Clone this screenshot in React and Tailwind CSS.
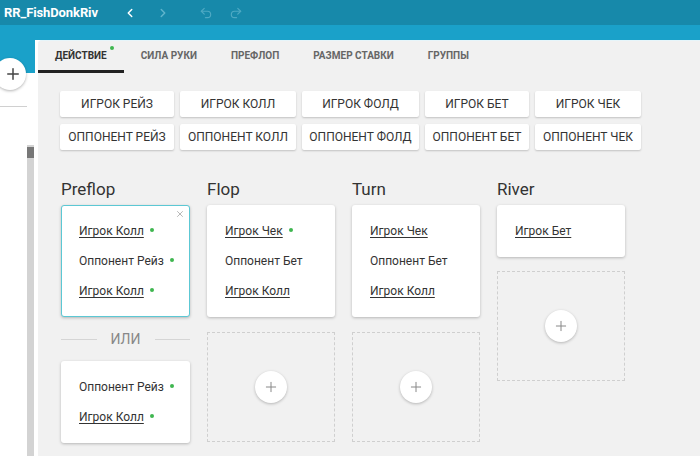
import { ChevronLeft, ChevronRight, Undo2, Redo2, Plus, X } from 'lucide-react'

const tabs = ['Действие', 'Сила руки', 'Префлоп', 'Размер ставки', 'Группы']

const actions = [
  'Игрок рейз', 'Игрок колл', 'Игрок фолд', 'Игрок бет', 'Игрок чек',
  'Оппонент рейз', 'Оппонент колл', 'Оппонент фолд', 'Оппонент бет', 'Оппонент чек',
]

const Dot = () => <span className="inline-block w-[4px] h-[4px] rounded-full bg-[#3fb650] ml-[6px] mb-[2px]" />

function Item({ text, link, dot }) {
  return (
    <div className="h-[30px] flex items-center whitespace-nowrap text-[12px] text-[#333]">
      <span className={link ? 'underline underline-offset-2 decoration-[#333]' : ''}>{text}</span>
      {dot && <Dot />}
    </div>
  )
}

function Card({ items, selected }) {
  return (
    <div
      className={
        'relative bg-white rounded-[3px] pl-[17px] pr-[8px] py-[10px] shadow-[0_1px_3px_rgba(0,0,0,0.25)] ' +
        (selected ? 'border border-[#5cc8d4]' : 'border border-transparent')
      }
    >
      {selected && <X size={10} strokeWidth={2} className="absolute right-[4px] top-[3px] text-[#aaa]" />}
      {items.map((it, i) => (
        <Item key={i} {...it} />
      ))}
    </div>
  )
}

function AddBox() {
  return (
    <div className="h-[110px] border border-dashed border-[#cfcfcf] flex items-center justify-center">
      <div className="w-[32px] h-[32px] rounded-full bg-white shadow-[0_1px_3px_rgba(0,0,0,0.25)] flex items-center justify-center">
        <Plus size={16} strokeWidth={1.5} className="text-[#888]" />
      </div>
    </div>
  )
}

export default function App() {
  return (
    <div className="w-[700px] h-[456px] overflow-hidden flex flex-col bg-white" style={{ fontFamily: 'Roboto, "Noto Sans", sans-serif' }}>
      {/* Header */}
      <div className="h-[25px] bg-[#1789aa] flex items-center shrink-0">
        <span className="ml-[4px] text-white font-bold text-[13px] tracking-[-0.1px]">RR_FishDonkRiv</span>
        <ChevronLeft size={14} strokeWidth={2.5} className="ml-[25px] text-white" />
        <ChevronRight size={14} strokeWidth={2.5} className="ml-[19px] text-[#5fb4cc]" />
        <Undo2 size={14} strokeWidth={2} className="ml-[29px] text-[#4ea9c3]" />
        <Redo2 size={14} strokeWidth={2} className="ml-[16px] text-[#4ea9c3]" />
      </div>

      <div className="flex-1 flex bg-[linear-gradient(to_bottom,#1aa1c9_15px,#ffffff_15px)]">
        {/* Sidebar */}
        <div className="w-[35px] flex flex-col shrink-0">
          <div className="relative h-[48px] bg-[#1aa1c9]">
            <div className="absolute left-[-6px] top-[33px] w-[32px] h-[32px] rounded-full bg-white shadow-[0_1px_3px_rgba(0,0,0,0.3)] flex items-center justify-center">
              <Plus size={18} strokeWidth={2} className="ml-[6px] text-[#444]" />
            </div>
          </div>
          <div className="h-[33px]" />
          <div className="w-[27px] h-px bg-[#d0d0d0]" />
          <div className="flex-1 flex justify-end pr-[1px] pt-[38px]">
            <div className="w-[7px] bg-[#d3d3d3] flex flex-col">
              <div className="h-[2px]" />
              <div className="h-[11px] bg-[#777]" />
            </div>
          </div>
        </div>

        {/* Main */}
        <div className="flex-1 ml-[3px] mt-[15px] bg-[#f1f1f1] rounded-tl-[4px] border-t border-[#e6f5fa] flex flex-col">
          <div className="h-[32px] flex items-stretch">
            {tabs.map((t, i) => (
              <div
                key={t}
                className={
                  'px-[17px] flex items-center uppercase font-bold text-[10px] ' +
                  (i === 0 ? 'text-[#333] border-b-[3px] border-[#222]' : 'text-[#666] pb-[3px]')
                }
              >
                <span className="relative">
                  {t}
                  {i === 0 && <span className="absolute -right-[7px] top-[-2px] w-[4px] h-[4px] rounded-full bg-[#3fb650]" />}
                </span>
              </div>
            ))}
          </div>

          <div className="pl-[22px] pt-[18px]">
            <div className="grid grid-cols-[114px_116px_117px_104px_106px] gap-x-[6px] gap-y-[7px]">
              {actions.map((a) => (
                <div
                  key={a}
                  className="h-[26px] bg-white rounded-[2px] shadow-[0_1px_2px_rgba(0,0,0,0.2)] flex items-center justify-center uppercase text-[12px] text-[#333]"
                >
                  {a}
                </div>
              ))}
            </div>

            <div className="mt-[29px] flex gap-[17px]">
              {/* Preflop */}
              <div className="w-[129px] ml-[1px] flex flex-col">
                <div className="text-[17px] text-[#333] h-[26px] leading-[20px]">Preflop</div>
                <Card
                  selected
                  items={[
                    { text: 'Игрок Колл', link: true, dot: true },
                    { text: 'Оппонент Рейз', dot: true },
                    { text: 'Игрок Колл', link: true, dot: true },
                  ]}
                />
                <div className="flex items-center gap-[14px] my-[14px] h-[16px]">
                  <div className="flex-1 h-px bg-[#d5d5d5]" />
                  <span className="text-[14px] text-[#888]">ИЛИ</span>
                  <div className="flex-1 h-px bg-[#d5d5d5]" />
                </div>
                <Card
                  items={[
                    { text: 'Оппонент Рейз', dot: true },
                    { text: 'Игрок Колл', link: true, dot: true },
                  ]}
                />
              </div>

              {/* Flop */}
              <div className="w-[128px] flex flex-col">
                <div className="text-[17px] text-[#333] h-[26px] leading-[20px]">Flop</div>
                <Card
                  items={[
                    { text: 'Игрок Чек', link: true, dot: true },
                    { text: 'Оппонент Бет' },
                    { text: 'Игрок Колл', link: true },
                  ]}
                />
                <div className="mt-[15px]">
                  <AddBox />
                </div>
              </div>

              {/* Turn */}
              <div className="w-[128px] flex flex-col">
                <div className="text-[17px] text-[#333] h-[26px] leading-[20px]">Turn</div>
                <Card
                  items={[
                    { text: 'Игрок Чек', link: true },
                    { text: 'Оппонент Бет' },
                    { text: 'Игрок Колл', link: true },
                  ]}
                />
                <div className="mt-[15px]">
                  <AddBox />
                </div>
              </div>

              {/* River */}
              <div className="w-[128px] flex flex-col">
                <div className="text-[17px] text-[#333] h-[26px] leading-[20px]">River</div>
                <Card items={[{ text: 'Игрок Бет', link: true }]} />
                <div className="mt-[14px]">
                  <AddBox />
                </div>
              </div>
            </div>
          </div>
        </div>
      </div>
    </div>
  )
}
